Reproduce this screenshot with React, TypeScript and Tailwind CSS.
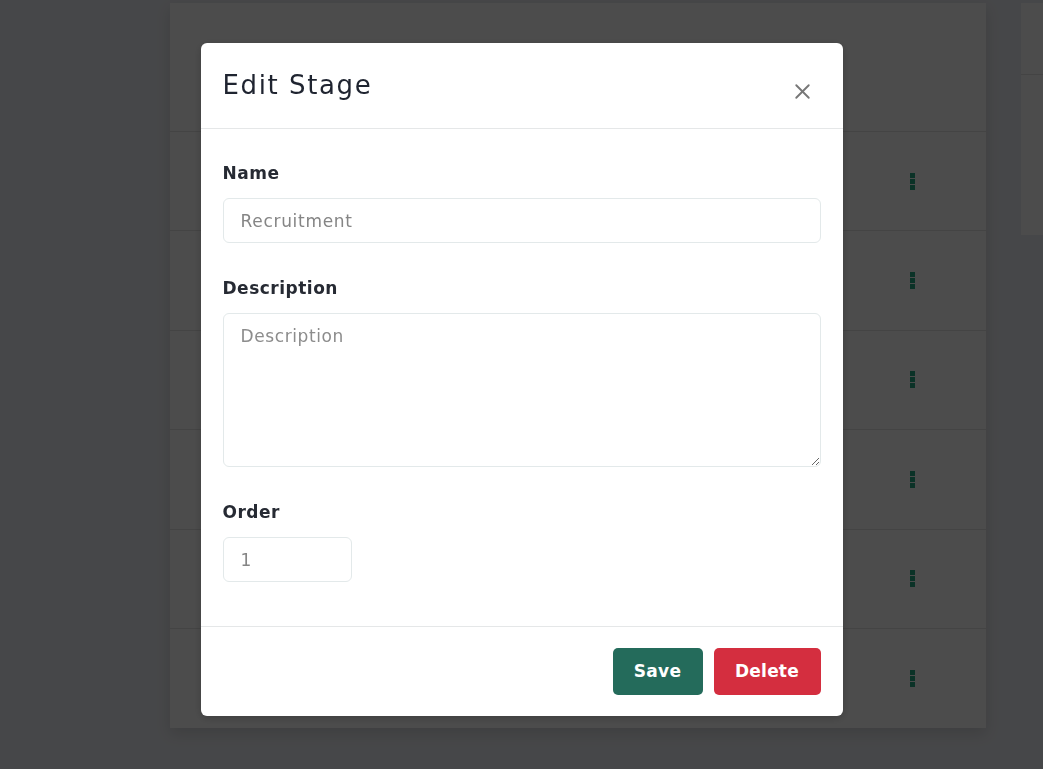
import { X } from 'lucide-react'

const font = { fontFamily: '"DejaVu Sans", "Liberation Sans", sans-serif' }

function Kebab() {
  return (
    <div className="flex flex-col gap-[1px]">
      <span className="h-[5px] w-[5px] bg-[#27a883]" />
      <span className="h-[5px] w-[5px] bg-[#27a883]" />
      <span className="h-[5px] w-[5px] bg-[#27a883]" />
    </div>
  )
}

function StagesCard() {
  const rows = [0, 1, 2, 3, 4, 5]
  return (
    <section className="w-[816px] shrink-0 bg-white shadow-[0_6px_14px_rgba(0,0,0,0.12)]">
      <div className="h-[129px] border-b border-[#e4e4e4]" />
      {rows.map((r) => (
        <div
          key={r}
          className="flex h-[99.4px] items-center justify-end border-b border-[#e4e4e4] pr-[71px] last:border-b-0"
        >
          <Kebab />
        </div>
      ))}
    </section>
  )
}

function Field({ label, children }: { label: string; children: React.ReactNode }) {
  return (
    <div>
      <label className="mb-[13px] block text-[17px] font-bold leading-[24px] tracking-[0.5px] text-[#262a33]">
        {label}
      </label>
      {children}
    </div>
  )
}

export default function App() {
  return (
    <div className="relative min-h-screen overflow-hidden bg-[#eceef3]" style={font}>
      <div className="flex gap-[35px] pl-[170px] pt-[3px]">
        <StagesCard />
        <section className="w-[300px] shrink-0 self-start bg-white">
          <div className="h-[72px] border-b border-[#e4e4e4]" />
          <div className="h-[160px]" />
        </section>
      </div>

      <div className="fixed inset-0 flex items-start justify-center bg-black/[0.7] pt-[43px]">
        <div className="w-[642px] rounded-[6px] bg-white shadow-[0_2px_8px_rgba(0,0,0,0.2)]">
          <header className="flex h-[86px] items-start justify-between border-b border-[#e5e7e8] px-[22px] pt-[26px]">
            <h2 className="text-[26px] font-normal leading-[32px] tracking-[1.6px] text-[#1f2430]">
              Edit Stage
            </h2>
            <button className="mr-[6px] mt-[10px] text-[#777777]">
              <X size={25} strokeWidth={1.8} />
            </button>
          </header>

          <div className="flex flex-col gap-[33px] px-[22px] pb-[44px] pt-[32px]">
            <Field label="Name">
              <input
                type="text"
                defaultValue="Recruitment"
                className="h-[45px] w-full rounded-[6px] border border-[#e3e9ea] pl-[17px] text-[17px] tracking-[0.7px] text-[#858585] outline-none"
              />
            </Field>
            <Field label="Description">
              <textarea
                placeholder="Description"
                className="block h-[154px] w-full rounded-[6px] border border-[#e3e9ea] px-[17px] py-[10px] text-[17px] leading-[24px] tracking-[0.6px] text-[#858585] outline-none placeholder:text-[#8c8c8c]"
              />
            </Field>
            <Field label="Order">
              <input
                type="text"
                defaultValue="1"
                className="h-[45px] w-[129px] rounded-[6px] border border-[#e3e9ea] pl-[17px] text-[17px] text-[#858585] outline-none"
              />
            </Field>
          </div>

          <footer className="flex justify-end gap-[11px] border-t border-[#e5e7e8] px-[22px] py-[21px]">
            <button className="h-[47px] w-[90px] rounded-[5px] bg-[#246b5b] text-[17px] font-bold tracking-[0.3px] text-white">
              Save
            </button>
            <button className="h-[47px] w-[107px] rounded-[5px] bg-[#d42e3f] text-[17px] font-bold tracking-[0.2px] text-white">
              Delete
            </button>
          </footer>
        </div>
      </div>
    </div>
  )
}
